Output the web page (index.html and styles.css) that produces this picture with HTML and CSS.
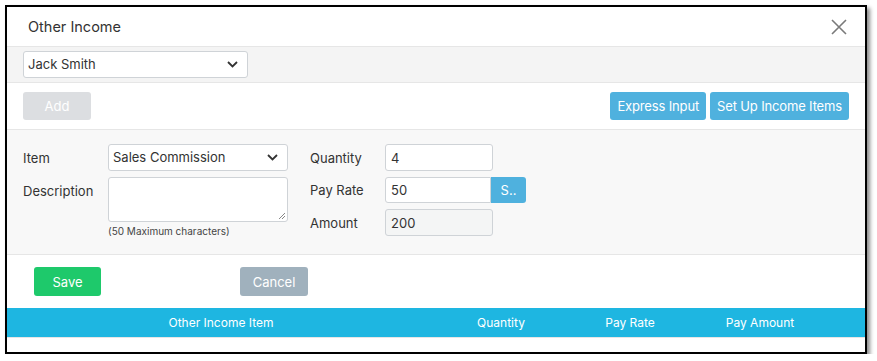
FILE: index.html
```html
<!DOCTYPE html>
<html>
<head>
<meta charset="utf-8">
<link rel="stylesheet" href="styles.css">
</head>
<body>
<div class="modal">
  <div class="modal-header">
    <span class="title">Other Income</span>
    <button class="close" aria-label="Close">
      <svg width="16" height="16" viewBox="0 0 16 16"><path d="M1 1L15 15M15 1L1 15" stroke="#7a7a7a" stroke-width="1.6" fill="none"/></svg>
    </button>
  </div>
  <div class="emp-band">
    <div class="select emp-select">
      <span>Jack Smith</span>
      <svg class="chev" width="11" height="7" viewBox="0 0 11 7"><path d="M1 1L5.5 5.5L10 1" stroke="#333" stroke-width="1.8" fill="none"/></svg>
    </div>
  </div>
  <div class="action-row">
    <button class="btn btn-disabled">Add</button>
    <div class="right-actions">
      <button class="btn btn-blue">Express Input</button>
      <button class="btn btn-blue">Set Up Income Items</button>
    </div>
  </div>
  <div class="form-area">
    <div class="col col-left">
      <div class="row">
        <label>Item</label>
        <div class="select item-select">
          <span>Sales Commission</span>
          <svg class="chev" width="11" height="7" viewBox="0 0 11 7"><path d="M1 1L5.5 5.5L10 1" stroke="#333" stroke-width="1.8" fill="none"/></svg>
        </div>
      </div>
      <div class="row row-desc">
        <label>Description</label>
        <div class="desc-wrap">
          <div class="textarea">
            <svg class="grip" width="8" height="8" viewBox="0 0 8 8"><path d="M7 1L1 7M7 4L4 7" stroke="#888" stroke-width="1" fill="none"/></svg>
          </div>
          <div class="note">(50 Maximum characters)</div>
        </div>
      </div>
    </div>
    <div class="col col-mid">
      <div class="row">
        <label>Quantity</label>
        <div class="input">4</div>
      </div>
      <div class="row">
        <label>Pay Rate</label>
        <div class="input-group">
          <div class="input input-rate">50</div>
          <button class="btn-s">S..</button>
        </div>
      </div>
      <div class="row">
        <label>Amount</label>
        <div class="input input-disabled">200</div>
      </div>
    </div>
  </div>
  <div class="save-row">
    <button class="btn btn-green">Save</button>
    <button class="btn btn-gray">Cancel</button>
  </div>
  <div class="table-head">
    <div class="th">Other Income Item</div>
    <div class="th">Quantity</div>
    <div class="th">Pay Rate</div>
    <div class="th">Pay Amount</div>
    <div class="th"></div>
  </div>
  <div class="table-body"></div>
</div>
</body>
</html>
```
FILE: styles.css
```css
* { box-sizing: border-box; }
body {
  margin: 0;
  background: #ffffff;
  font-family: Inter, "Liberation Sans", Arial, sans-serif;
  color: #333333;
  font-size: 13px;
}
.modal {
  margin: 5px 0 0 5px;
  width: 862px;
  height: 349px;
  border: 2px solid #000;
  background: #fff;
  box-shadow: 3px 3px 4px rgba(0,0,0,0.45);
  display: flex;
  flex-direction: column;
  overflow: hidden;
}
.modal-header {
  height: 40px;
  flex: none;
  border-bottom: 1px solid #e6e6e6;
  display: flex;
  align-items: center;
  justify-content: space-between;
  padding: 0 18px 0 21px;
}
.title {
  font-size: 14.5px;
  color: #333;
}
.close {
  border: 0;
  background: none;
  padding: 0;
  width: 16px;
  height: 16px;
  display: flex;
}
.emp-band {
  height: 36px;
  flex: none;
  background: #f4f4f4;
  border-bottom: 1px solid #e6e6e6;
  padding: 4px 16px 0;
}
.select {
  height: 27px;
  background: #fff;
  border: 1px solid #cfd3d7;
  border-radius: 3px;
  display: flex;
  align-items: center;
  justify-content: space-between;
  padding: 0 9px 2px 4px;
  color: #333;
}
.emp-select { width: 225px; }
.item-select { width: 180px; }
.chev { flex: none; margin-top: 2px; }
.action-row {
  height: 47px;
  flex: none;
  border-bottom: 1px solid #e6e6e6;
  display: flex;
  align-items: center;
  justify-content: space-between;
  padding: 0 16px;
}
.right-actions {
  display: flex;
  gap: 4px;
}
.btn {
  border: 0;
  border-radius: 3px;
  color: #fff;
  font-family: inherit;
  font-size: 13px;
  height: 28px;
  padding: 0 7px;
}
.btn-disabled { background: #dcdee1; width: 68px; }
.btn-blue { background: #4fb1de; padding: 0 7px; letter-spacing: -0.15px; }
.btn-green { background: #1ec96b; width: 67px; height: 29px; }
.btn-gray { background: #a0b1bd; width: 68px; height: 29px; }
.form-area {
  height: 125px;
  flex: none;
  background: #f8f8f8;
  border-bottom: 1px solid #e6e6e6;
  display: flex;
  padding: 14px 0 0 16px;
}
.col {
  display: flex;
  flex-direction: column;
  gap: 6px;
}
.col-left { width: 287px; }
.row {
  display: flex;
  align-items: center;
}
.row label {
  color: #333;
}
.col-left label { width: 85px; }
.col-mid label { width: 75px; }
.row-desc { align-items: flex-start; }
.row-desc label { padding-top: 6px; }
.textarea {
  width: 180px;
  height: 45px;
  background: #fff;
  border: 1px solid #cfd3d7;
  border-radius: 3px;
  position: relative;
}
.grip {
  position: absolute;
  right: 1px;
  bottom: 1px;
}
.note {
  font-size: 10px;
  color: #444;
  margin-top: 3px;
}
.input {
  width: 108px;
  height: 27px;
  background: #fff;
  border: 1px solid #cfd3d7;
  border-radius: 3px;
  display: flex;
  align-items: center;
  padding: 0 5px;
  color: #333;
}
.input-group { display: flex; }
.input-rate {
  width: 106px;
  height: 26px;
  border-radius: 3px 0 0 3px;
}
.btn-s {
  width: 35px;
  height: 26px;
  border: 0;
  background: #4fb1de;
  color: #fff;
  font-family: inherit;
  font-size: 13px;
  border-radius: 0 3px 3px 0;
  padding: 0;
}
.input-disabled { background: #f4f5f5; }
.save-row {
  height: 53px;
  flex: none;
  display: flex;
  align-items: center;
  padding: 0 0 0 27px;
  gap: 139px;
}
.table-head {
  height: 30px;
  flex: none;
  background: #1eb6e1;
  display: grid;
  grid-template-columns: 428px 132px 126px 134px 1fr;
  border-bottom: 1px solid #e6e6e6;
}
.th {
  color: #fff;
  font-size: 12px;
  display: flex;
  align-items: center;
  justify-content: center;
}
.table-body { flex: 1; }
```
